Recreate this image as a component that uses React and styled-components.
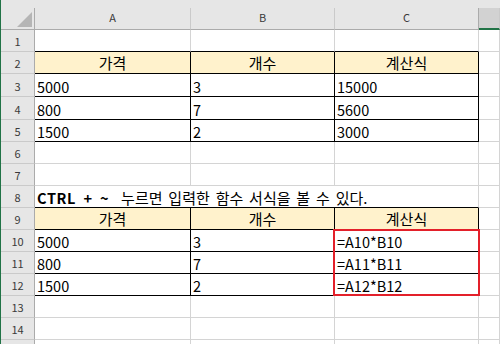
import React from "react";
import styled, { createGlobalStyle } from "styled-components";

const GlobalStyle = createGlobalStyle`
  html, body { margin: 0; padding: 0; background: #ffffff; overflow: hidden; }
  body { font-family: "Noto Sans CJK KR", "Noto Sans", sans-serif; }
`;

const GRID = "#d4d4d4";
const BLACK = "#000000";
const HEAD_BG = "#e6e6e6";
const HEAD_LINE = "#ababab";
const HEAD_SEP = "#cacaca";
const GREEN = "#217346";
const YELLOW = "#fff2cc";
const RED = "#e3202a";

const Sheet = styled.div`
  width: 499px;
  height: 344px;
  overflow: hidden;
  border-left: 1px solid ${GREEN};
  display: flex;
  flex-direction: column;
`;

const TopStrip = styled.div`
  flex: 0 0 8px;
  background: ${HEAD_BG};
`;

const Row = styled.div`
  flex: 0 0 ${(p) => p.$h}px;
  display: grid;
  grid-template-columns: 34px 156px 144px 144px 1fr;
`;

const Corner = styled.div`
  box-sizing: border-box;
  background: ${HEAD_BG};
  border-right: 1px solid ${HEAD_LINE};
  border-bottom: 1px solid ${HEAD_LINE};
  display: flex;
  justify-content: flex-end;
  align-items: flex-end;
  padding: 0 2px 2px 0;
`;

const ColHeader = styled.div`
  box-sizing: border-box;
  background: ${(p) => (p.$selected ? "#d2d2d2" : HEAD_BG)};
  border-right: 1px solid ${(p) => (p.$dark ? HEAD_LINE : HEAD_SEP)};
  border-bottom: ${(p) => (p.$selected ? `2px solid ${GREEN}` : `1px solid ${HEAD_LINE}`)};
  display: flex;
  align-items: center;
  justify-content: center;
  padding-bottom: 2px;
  font-size: 11px;
  line-height: 1;
  color: #3a3a3a;
`;

const RowHeader = styled.div`
  box-sizing: border-box;
  background: ${HEAD_BG};
  border-right: 1px solid ${HEAD_LINE};
  border-bottom: 1px solid ${HEAD_SEP};
  display: flex;
  align-items: center;
  justify-content: center;
  padding-top: 2px;
  font-size: 11px;
  line-height: 1;
  color: #3a3a3a;
`;

const Cell = styled.div`
  position: relative;
  box-sizing: border-box;
  min-width: 0;
  grid-column: span ${(p) => p.$span || 1};
  background: ${(p) => p.$fill || "transparent"};
  border-right: 1px solid ${(p) => p.$right || GRID};
  border-bottom: 1px solid ${(p) => p.$bottom || GRID};
  display: flex;
  align-items: ${(p) => (p.$center ? "center" : "flex-end")};
  justify-content: ${(p) => (p.$center ? "center" : "flex-start")};
  padding: ${(p) => (p.$center ? "0 0 1px 0" : "0 0 2px 2px")};
  font-size: ${(p) => (p.$center ? "15px" : "14.5px")};
  line-height: 1;
  color: #000;
  white-space: nowrap;
`;

const Bold = styled.b`
  font-weight: 700;
  letter-spacing: 0.6px;
  word-spacing: 3.5px;
`;

const Note = styled.span`
  font-size: 15px;
  margin-left: 12px;
  word-spacing: 2.5px;
`;

const Highlight = styled.div`
  position: absolute;
  z-index: 1;
  left: -2px;
  top: -1px;
  width: 147px;
  height: 67px;
  box-sizing: border-box;
  border: 2px solid ${RED};
  pointer-events: none;
`;

const heights = [22, 22, 23, 23, 22, 22, 22, 22, 22, 22, 22, 22, 22, 22, 22];

const table1 = {
  2: ["가격", "개수", "계산식"],
  3: ["5000", "3", "15000"],
  4: ["800", "7", "5600"],
  5: ["1500", "2", "3000"],
  9: ["가격", "개수", "계산식"],
  10: ["5000", "3", "=A10*B10"],
  11: ["800", "7", "=A11*B11"],
  12: ["1500", "2", "=A12*B12"],
};
const headerRows = new Set([2, 9]);

function renderCells(n) {
  if (n === 8) {
    return (
      <>
        <Cell $span={3} $bottom={BLACK}>
          <Bold>CTRL + ~</Bold>
          <Note>누르면 입력한 함수 서식을 볼 수 있다.</Note>
        </Cell>
        <Cell />
      </>
    );
  }
  const data = table1[n];
  if (data) {
    const isHead = headerRows.has(n);
    return (
      <>
        {data.map((v, i) => (
          <Cell
            key={i}
            $right={BLACK}
            $bottom={BLACK}
            $fill={isHead ? YELLOW : undefined}
            $center={isHead}
          >
            {v}
            {n === 10 && i === 2 && <Highlight />}
          </Cell>
        ))}
        <Cell />
      </>
    );
  }
  const topOfTable = n === 1;
  return (
    <>
      <Cell $bottom={topOfTable ? BLACK : undefined} />
      <Cell $bottom={topOfTable ? BLACK : undefined} />
      <Cell $bottom={topOfTable ? BLACK : undefined} />
      <Cell />
    </>
  );
}

export default function App() {
  return (
    <>
      <GlobalStyle />
      <Sheet>
        <TopStrip />
        <Row $h={22}>
          <Corner>
            <svg width="15" height="15" viewBox="0 0 15 15">
              <polygon points="15,0 15,15 0,15" fill="#b5b5b5" />
            </svg>
          </Corner>
          <ColHeader>A</ColHeader>
          <ColHeader>B</ColHeader>
          <ColHeader $dark>C</ColHeader>
          <ColHeader $selected />
        </Row>
        {heights.map((h, idx) => {
          const n = idx + 1;
          return (
            <Row key={n} $h={h}>
              <RowHeader>{n < 15 ? n : ""}</RowHeader>
              {renderCells(n)}
            </Row>
          );
        })}
      </Sheet>
    </>
  );
}
